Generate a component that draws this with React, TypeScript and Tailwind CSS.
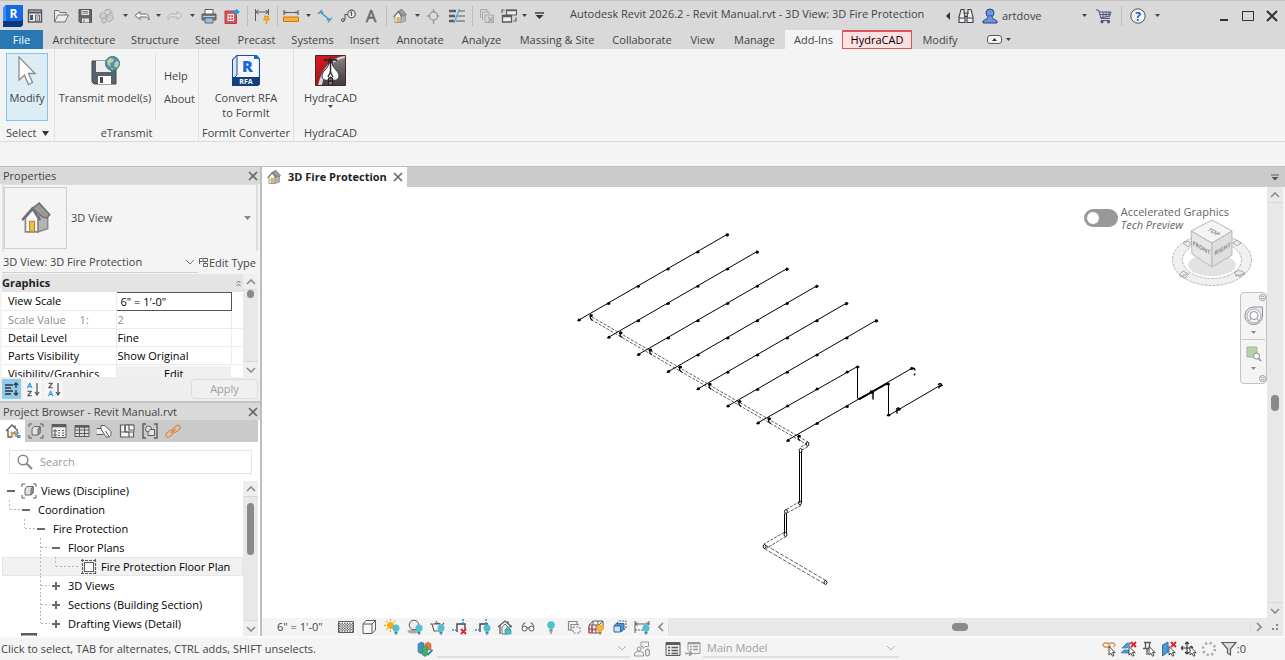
import { ReactNode, useState } from 'react'

type IconProps = { children: ReactNode; w?: number; h?: number; box?: string }

function Svg({ children, w = 16, h = 16, box = '0 0 16 16' }: IconProps) {
  return (
    <svg width={w} height={h} viewBox={box} fill="none" stroke="#5c5c5c" className="shrink-0" aria-hidden="true">
      {children}
    </svg>
  )
}

const Caret = ({ color = '#444' }: { color?: string }) => (
  <Svg w={5} h={3} box="0 0 5 3">
    <path d="M0 0h5L2.500 3z" fill={color} stroke="none" />
  </Svg>
)

const Chevron = ({ d = 'M1 1l4 4 4-4', color = '#8a8a8a' }: { d?: string; color?: string }) => (
  <Svg w={10} h={6} box="0 0 10 6">
    <path d={d} stroke={color} strokeWidth="1.600" />
  </Svg>
)
const up = 'M1 5l4-4 4 4'

const Cross = () => (
  <Svg w={10} h={10} box="0 0 10 10">
    <path d="M1 1l8 8M9 1l-8 8" stroke="#666" strokeWidth="1.600" />
  </Svg>
)

const House = ({ size = 16 }: { size?: number }) => (
  <Svg w={size} h={size}>
    <path d="M3 8v6.500h6V8L6.500 4z" fill="#f7f7f7" stroke="#888" strokeWidth=".8" />
    <path d="M9 14.500l4.500-1.500V6.500L10 6 9 8z" fill="#b4b4b4" stroke="#888" strokeWidth=".7" />
    <path d="M6.300 3.500L9.500 1 14.500 6.500 13 8 11 7.500z" fill="#9b9b9b" stroke="#707070" strokeWidth=".7" />
    <path d="M1.500 9L6.300 3.500 10 9" stroke="#707070" strokeWidth="1.100" />
    <path d="M5 9.500h2.300v5H5z" fill="#f2bd42" stroke="#a88634" strokeWidth=".5" />
  </Svg>
)

const CursorArrow = ({ x = 7, y = 6 }: { x?: number; y?: number }) => (
  <path transform={`translate(${x} ${y})`} d="M0 0v8.500l2-1.800 1.500 3 1.400-.7-1.400-2.900h2.700z" fill="#fff" stroke="#333" strokeWidth=".9" />
)

const RedX = ({ x = 9, y = 0 }: { x?: number; y?: number }) => (
  <path transform={`translate(${x} ${y})`} d="M1 1l5 5M6 1L1 6" stroke="#e0222b" strokeWidth="1.900" />
)

const Bulb = ({ color = '#4fc0cf' }: { color?: string }) => (
  <>
    <circle cx="12" cy="9" r="3.500" fill={color} stroke="none" />
    <path d="M10.500 12h3v3h-3z" fill={color} stroke="none" />
    <path d="M10.800 13.500h2.400M11 15h2" stroke="#666" strokeWidth=".8" />
  </>
)

const RevitLogo = () => (
  <Svg w={20} h={22} box="0 0 20 22">
    <path d="M3 0h17v18l-2 3H0V3z" fill="#1467e6" stroke="none" />
    <path d="M0 3L3 0v16L0 20z" fill="#3c8dfa" stroke="none" />
    <path d="M0 16h18l2-2v6l-2 2H0z" fill="#07397f" stroke="none" />
    <text x="10.500" y="13" textAnchor="middle" fontSize="12" fontWeight="700" fill="#fff" stroke="none">R</text>
  </Svg>
)

const qat: { name: string; w: string; icon?: ReactNode }[] = [
  { name: 'Revit', w: 'w-[26px]', icon: <RevitLogo /> },
  { name: 'Home', w: 'w-[18px]', icon: <Svg><rect x="1.500" y="2" width="13" height="12" fill="#eee" stroke="#4c5560" strokeWidth="1.400" /><path d="M1 4.500h14" stroke="#4c5560" strokeWidth="2" /><rect x="3" y="7" width="3" height="5" fill="#4c5560" stroke="none" /><path d="M8.500 7h4v6h-4zM9.500 9h2M9.500 11h2" strokeWidth=".9" /></Svg> },
  { name: 'gap', w: 'w-[6px]' },
  { name: 'Open', w: 'w-[22px]', icon: <Svg><path d="M1.500 14V2.500h4l1.500 2h6V7M1.500 14L5 7h10.500l-3.500 7z" fill="#ececec" stroke="#707070" /></Svg> },
  { name: 'gap', w: 'w-[2px]' },
  { name: 'Save', w: 'w-[22px]', icon: <Svg><path d="M2 1.500h12.500v13H3l-1-1z" fill="#666" stroke="#555" /><path d="M4.500 2h7.500v5H4.500zM5 10.500h7v4H5z" fill="#e4e4e4" stroke="none" /><path d="M5.500 3.500h5.500M5.500 5.200h5.500M7 11.500v3" strokeWidth=".8" /></Svg> },
  { name: 'Synchronize', w: 'w-[22px]', icon: <Svg><g stroke="#aaa" fill="#cfcfcf"><path d="M1 6l3-1.500L7 6v3.500L4 11 1 9.500zM6 4V2.500L9 1l3 1.500V5M7 8l3-2 4 2v3l-4 3-3-3z" /><circle cx="5" cy="12.500" r="2.500" /><path d="M9 10a4 4 0 0 1 5-5" /></g></Svg> },
  { name: 'caret', w: 'w-[14px]' },
  { name: 'Undo', w: 'w-[20px]', icon: <Svg><path d="M1 7.500l5-4v2.500h5.500c3 0 3.500 2.500 3.500 6C14 9.500 13 9 11 9H6v2.500z" fill="#f2f2f2" stroke="#707070" /></Svg> },
  { name: 'caret', w: 'w-[12px]' },
  { name: 'Redo', w: 'w-[22px]', icon: <Svg><path d="M15 7.500l-5-4v2.500H4.500C1.500 6 1 8.500 1 12c1-2.500 2-3 4-3h5v2.500z" fill="#dedede" stroke="#b4b4b4" /></Svg> },
  { name: 'caret', w: 'w-[12px]' },
  { name: 'Print', w: 'w-[22px]', icon: <Svg><path d="M4 6V1.500h8V6" fill="#fff" /><path d="M1 6h14v6H1z" fill="#777" /><path d="M2 8.500h12" stroke="#ccc" /><path d="M4 10h8v5H4z" fill="#8cc5ef" stroke="#666" /></Svg> },
  { name: 'Export PDF', w: 'w-[24px]', icon: <Svg><path d="M1 3h11.500v12.500H1z" fill="#d5535b" stroke="#b93a42" /><path d="M4 6.500h5.500v6H4z" fill="#d5535b" stroke="#fff" /><path d="M4 9.500h5.500M6.800 6.500v6" stroke="#fff" strokeWidth=".7" /><path d="M8.500 5V2.500H12V.5l4 3.500-4 3V5z" fill="#1b9be4" stroke="none" /></Svg> },
  { name: 'sep', w: 'w-[6px]' },
  { name: 'Measure', w: 'w-[24px]', icon: <Svg><path d="M1.500 1v12M14.500 1v6M1.500 4h13M1.500 4l3-2M1.500 4l3 2M14.500 4l-3-2M14.500 4l-3 2" /><path d="M10 8.500h5M11 8v3M14 8v3M9 11.500h7M12.500 12v4" stroke="#f19c13" strokeWidth="1.500" /></Svg> },
  { name: 'sep', w: 'w-[6px]' },
  { name: 'Ruler', w: 'w-[22px]', icon: <Svg><path d="M1 2v5M15 2v5M1 4.500h14M3 3.500v2M13 3.500v2" strokeWidth="1.200" /><path d="M.5 9h15v4.500H.5z" fill="#f8b23b" stroke="#c27a10" /></Svg> },
  { name: 'caret', w: 'w-[12px]' },
  { name: 'Aligned Dimension', w: 'w-[22px]', icon: <Svg><path d="M3 4l10 8" stroke="#2d96dc" strokeWidth="1.500" /><path d="M1 6l4-4M11 14.500l4-5M3 4l3.500.4M13 12l-3.500-.4" stroke="#4c8cba" strokeWidth="1.200" /></Svg> },
  { name: 'Tag', w: 'w-[24px]', icon: <Svg><circle cx="11.500" cy="6" r="3.800" fill="#e7e7e7" strokeWidth="1.200" /><path d="M10.500 5l1-1v4M7.500 6.500H5V12" strokeWidth="1.100" /><path d="M5 11.500L2 14" /><circle cx="3" cy="12" r="1.500" /></Svg> },
  { name: 'Text', w: 'w-[22px]', icon: <Svg w={16} h={20} box="0 0 16 20"><text x="8" y="16" textAnchor="middle" fontSize="16" fill="#666" stroke="#666" strokeWidth=".6">A</text></Svg> },
  { name: 'sep', w: 'w-[8px]' },
  { name: 'Default 3D View', w: 'w-[20px]', icon: <House /> },
  { name: 'caret', w: 'w-[14px]' },
  { name: 'Section', w: 'w-[20px]', icon: <Svg><path d="M8 3l6 5-6 5z" fill="#b5b5b5" stroke="none" /><circle cx="7.500" cy="8" r="4" fill="#dcdcdc" stroke="#999" strokeWidth="1.300" /><path d="M7.500 1v3M7.500 12v4M1 8h2.500" stroke="#999" strokeWidth="1.300" /></Svg> },
  { name: 'Thin Lines', w: 'w-[26px]', icon: <Svg><path d="M0 3h7M0 8h6M0 13h5" strokeWidth="2.600" /><path d="M9 3h7M8 8h8M7 13h9" strokeWidth="1.200" /><path d="M10.500 1L5 15" stroke="#58a9e0" strokeWidth="1.400" /></Svg> },
  { name: 'sep', w: 'w-[4px]' },
  { name: 'Close Inactive Views', w: 'w-[26px]', icon: <Svg><g stroke="#a8a8a8"><path d="M1.500 10V1.500H8V4M3.500 12V4H10v2M6 7h8.500v7.500H6z" /><path d="M9 9l5 5M14 9l-5 5" strokeWidth="1.600" /></g></Svg> },
  { name: 'Switch Windows', w: 'w-[18px]', icon: <Svg><path d="M5.500 2h10v5h-10z" fill="#eee" strokeWidth="1.200" /><path d="M1.500 7.500h9v6.500h-9z" fill="#eee" strokeWidth="1.300" /><path d="M5 2.500h11M1 8.500h10" strokeWidth="1.600" /><path d="M1 2h2.500M1 1.500V5M15 9.500V13h-2.500" strokeWidth="1.200" /></Svg> },
  { name: 'caret', w: 'w-[12px]' },
  { name: 'Customize', w: 'w-[18px]', icon: <Svg w={9} h={7} box="0 0 9 7"><path d="M0 1h9" stroke="#333" strokeWidth="1.400" /><path d="M.5 3h8l-4 4z" fill="#333" stroke="none" /></Svg> },
]

function TitleBar() {
  return (
    <header className="flex h-[30px] shrink-0 items-center border-t border-[#c4c4c4] bg-[#d9d9d9]">
      {qat.map((item, i) => {
        if (item.name === 'gap') return <span key={i} className={item.w} />
        if (item.name === 'sep')
          return (
            <span key={i} className={`${item.w} flex justify-center`}>
              <span className="h-5 w-px bg-[#bcbcbc]" />
            </span>
          )
        return (
          <button
            key={i}
            aria-label={item.name === 'caret' ? 'More options' : item.name}
            className={`${item.w} flex h-6 shrink-0 items-center justify-center`}
          >
            {item.icon ?? <Caret />}
          </button>
        )
      })}
      <h1 className="-mt-1 ml-[22px] whitespace-nowrap">Autodesk Revit 2026.2 - Revit Manual.rvt - 3D View: 3D Fire Protection</h1>

      <div className="ml-auto flex items-center">
        <button aria-label="Collapse search" className="flex w-3 justify-center">
          <Svg w={4} h={8} box="0 0 4 8"><path d="M4 0v8L0 4z" fill="#333" stroke="none" /></Svg>
        </button>
        <button aria-label="Search" className="flex w-6 justify-center">
          <Svg><path d="M3 1.500h3v4l1 2.500v6.500H1V9zM10 1.500h3L15 9v5.500H9V8l1-2.500zM6 5h4M6 8.500h4M1 10h6M9 10h6" fill="#eee" stroke="#39424c" strokeWidth="1.100" /></Svg>
        </button>
        <button className="flex items-center">
          <span className="flex w-6 justify-center">
            <Svg><circle cx="8" cy="5" r="4" fill="#6b94e8" stroke="#2c4374" /><path d="M1 15v-2l5-3V8h4v2l5 3v2z" fill="#6b94e8" stroke="#2c4374" /><path d="M6 8.500h4v2H6z" fill="#6b94e8" stroke="none" /></Svg>
          </span>
          <span className="w-[75px] text-left">artdove</span>
          <span className="flex w-[14px] justify-center"><Caret /></span>
        </button>
        <button aria-label="App Store" className="flex w-[26px] justify-center">
          <Svg><path d="M0 2h2.500L5 10.500h9M3 4h12l-1.500 4.500L5 9.500M5 12.500h8.500M7 4v5M10 4v5M13 4v4M4 6.500h10" stroke="#47557f" /><circle cx="6" cy="13.800" r="1.200" fill="#47557f" /><circle cx="12.500" cy="13.800" r="1.200" fill="#47557f" /></Svg>
        </button>
        <span className="mx-1 h-5 w-px bg-[#bcbcbc]" />
        <button aria-label="Help" className="flex w-6 justify-center">
          <Svg><circle cx="8" cy="8" r="7.200" fill="#f5f5f5" stroke="#47505c" /><text x="8" y="12.500" textAnchor="middle" fontSize="12" fontWeight="700" fill="#1c5fc4" stroke="none">?</text></Svg>
        </button>
        <button aria-label="Help options" className="flex w-[14px] justify-center"><Caret /></button>
        <div className="ml-12 flex pr-px">
          <button aria-label="Minimize" className="flex w-6 justify-center">
            <Svg w={12} h={12} box="0 0 12 12"><path d="M2 10h8" stroke="#333" strokeWidth="2" /></Svg>
          </button>
          <button aria-label="Maximize" className="flex w-6 justify-center">
            <Svg w={12} h={12} box="0 0 12 12"><path d="M.5 1.500h11v9H.5z" stroke="#333" /><path d="M0 1.500h12" stroke="#333" /></Svg>
          </button>
          <button aria-label="Close" className="flex w-6 justify-center">
            <Svg w={12} h={12} box="0 0 12 12"><path d="M1 1l10 10M11 1L1 11" stroke="#333" strokeWidth="2" /></Svg>
          </button>
        </div>
      </div>
    </header>
  )
}

const tabs = [
  ['File', 'w-[43px] bg-[#2878b4] text-white mr-px'],
  ['Architecture', 'w-20'],
  ['Structure', 'w-[62px]'],
  ['Steel', 'w-[43px]'],
  ['Precast', 'w-[55px]'],
  ['Systems', 'w-[57px]'],
  ['Insert', 'w-[47px]'],
  ['Annotate', 'w-16'],
  ['Analyze', 'w-[59px]'],
  ['Massing & Site', 'w-[92px]'],
  ['Collaborate', 'w-[78px]'],
  ['View', 'w-[43px]'],
  ['Manage', 'w-[61px]'],
  ['Add-Ins', 'w-[57px] bg-[#f4f4f4]'],
  ['HydraCAD', 'w-[70px] border border-t-2 border-[#d8575c] bg-[#fde1e1] text-black'],
  ['Modify', 'w-14'],
]

function RibbonTabs() {
  return (
    <nav className="flex h-[19px] shrink-0 bg-[#d9d9d9]">
      {tabs.map(([name, style]) => (
        <button key={name} className={`${style} flex shrink-0 items-center justify-center whitespace-nowrap`}>
          {name}
        </button>
      ))}
      <button aria-label="Ribbon display" className="ml-[19px] flex items-center gap-1">
        <Svg w={15} h={9} box="0 0 15 9"><rect x=".5" y=".5" width="14" height="8" rx="2.500" fill="#f4f4f4" /><path d="M5 6h5L7.500 3z" fill="#333" stroke="none" /></Svg>
        <Caret />
      </button>
    </nav>
  )
}

function Ribbon() {
  return (
    <section className="flex h-[93px] shrink-0 border-b border-[#dadada] bg-[#f4f4f4]">
      <div className="flex w-[55px] flex-col border-r border-[#e0e0e0] pl-[6px] pt-1">
        <button className="flex h-[68px] w-[42px] flex-col items-center border border-[#83c5e4] bg-[#dcedf6] pt-[2px]">
          <Svg w={20} h={30} box="0 0 20 30"><path d="M2 1v23l5.500-5 4 9.500 4-2-4-9H18z" fill="#fff" stroke="#8a8a8a" strokeWidth="1.300" /></Svg>
          <span className="mt-1">Modify</span>
        </button>
        <button className="mt-1 flex items-center gap-[6px] whitespace-nowrap">
          Select
          <Svg w={7} h={5} box="0 0 7 5"><path d="M0 0h7L3.500 5z" fill="#333" stroke="none" /></Svg>
        </button>
      </div>

      <div className="flex w-[144px] flex-col border-r border-[#e0e0e0] pt-1">
        <div className="flex h-[68px]">
          <button className="flex w-[101px] flex-col items-center whitespace-nowrap border-r border-[#e0e0e0] pt-[3px]">
            <Svg w={32} h={30} box="0 0 32 30">
              <path d="M3 5h22l2 2v21H5l-2-2z" fill="#59636e" stroke="#414a54" />
              <path d="M7 5h15v11H7z" fill="#eee" stroke="none" />
              <path d="M9 20h13v8H9z" fill="#fff" stroke="none" />
              <path d="M11 21h3v6h-3z" fill="#414a54" stroke="none" />
              <circle cx="23.500" cy="7.500" r="7" fill="#568fad" stroke="#477486" />
              <path d="M18 5l3-3 4 1-1 3-3 1 1 4-3-2zM26 6l3-1 1 3-2 4-3-2zM22 12l3 1-2 1z" fill="#b5d49a" stroke="none" />
            </Svg>
            <span className="mt-1">Transmit model(s)</span>
          </button>
          <div className="flex flex-col items-start pl-2 pt-[11px]">
            <button className="h-[23px]">Help</button>
            <button className="h-[23px]">About</button>
          </div>
        </div>
        <p className="mt-1 text-center">eTransmit</p>
      </div>

      <div className="flex w-[95px] flex-col items-center whitespace-nowrap border-r border-[#e0e0e0] pt-1">
        <button className="flex h-[68px] flex-col items-center pt-[2px]">
          <Svg w={28} h={31} box="0 0 28 31">
            <path d="M5 .5h19l3.500 4V29l-3 1.500H.5V5z" fill="#f4f7fc" stroke="#1c4f9b" strokeWidth="1.200" />
            <path d="M.5 5L5 .5V20L.5 24z" fill="#dbe5f4" stroke="#1c4f9b" />
            <path d="M22 0h3l3 4h-6z" fill="#1767dc" stroke="none" />
            <path d="M0 22h28v7l-2 2H0z" fill="#133f82" stroke="none" />
            <text x="15.500" y="17" textAnchor="middle" fontSize="16" fontWeight="800" fill="#1767dc" stroke="none">R</text>
            <text x="14" y="29" textAnchor="middle" fontSize="7" fontWeight="700" fill="#fff" stroke="none">RFA</text>
          </Svg>
          <span className="mt-1 leading-[15px]">Convert RFA<br />to FormIt</span>
        </button>
        <p className="mt-1">FormIt Converter</p>
      </div>

      <div className="flex w-[73px] flex-col items-center pt-1">
        <button className="flex h-[68px] flex-col items-center pt-[2px]">
          <Svg w={31} h={31} box="0 0 31 31">
            <defs>
              <linearGradient id="red" x1="0" y1="0" x2="1" y2="1"><stop stopColor="#d91d23" /><stop offset="1" stopColor="#7a1216" /></linearGradient>
              <linearGradient id="steel" x1="0" y1="0" x2="0" y2="1"><stop stopColor="#8b8486" /><stop offset="1" stopColor="#423b3c" /></linearGradient>
            </defs>
            <path d="M.5.500h30v30H.5z" fill="url(#steel)" stroke="#4a2528" />
            <path d="M1 1h27C15 3 6 13 3 30H1z" fill="url(#red)" stroke="none" />
            <path d="M30 1C16 3 7 13 3 30h4C10 14 18 5 30 3z" fill="#d9d4d4" stroke="none" />
            <path d="M14 8C13 14 7 16 7 21c0 3 3 5 6 4l2-3h1l2 3c3 1 6-1 6-4 0-5-6-7-7-13z" fill="#fff" stroke="#333" />
            <path d="M9 6q1-2 3-1h7q2-1 3 1M15.500 3v14M13 8l2.500-3L18 8" stroke="#222" strokeWidth="1.400" />
            <path d="M13.500 23h4v7h-4z" fill="#777" stroke="#222" />
            <path d="M13 26h5M15.500 17l-2.500 5M15.500 17l2.500 5" stroke="#222" strokeWidth="1.300" />
          </Svg>
          <span className="mt-1 leading-[15px]">HydraCAD</span>
          <span className="leading-[5px]"><Caret /></span>
        </button>
        <p className="mt-1">HydraCAD</p>
      </div>
    </section>
  )
}

function Scrollbar({ thumb }: { thumb: string }) {
  return (
    <div className="flex w-[15px] shrink-0 flex-col items-center bg-[#e8e8e8]">
      <button aria-label="Scroll up" className="flex h-4 w-full shrink-0 items-center justify-center border-b border-[#d8d8d8] bg-[#eee]"><Chevron d={up} /></button>
      <span className={`${thumb} w-[7px] rounded-full bg-[#8a8a8a]`} />
      <button aria-label="Scroll down" className="mt-auto flex h-4 w-full shrink-0 items-center justify-center border-t border-[#d8d8d8] bg-[#eee]"><Chevron /></button>
    </div>
  )
}

function PanelTitle({ children }: { children: ReactNode }) {
  return (
    <div className="flex h-[17px] shrink-0 items-center justify-between bg-[#d9d9d9] pl-[3px] pr-[2px]">
      <h2>{children}</h2>
      <button aria-label="Close panel"><Cross /></button>
    </div>
  )
}

const sortIcon = (top: string, bottom: string, topColor: string, bottomColor: string) => (
  <Svg>
    <text x="4.500" y="7" textAnchor="middle" fontSize="8" fill={topColor} stroke={topColor} strokeWidth=".3">{top}</text>
    <text x="4.500" y="15" textAnchor="middle" fontSize="8" fill={bottomColor} stroke={bottomColor} strokeWidth=".3">{bottom}</text>
    <path d="M12 2v12M10 11l2 3 2-3" strokeWidth="1.300" />
  </Svg>
)

function Properties() {
  const cell = 'h-[18px] border-b border-r border-[#ececec] p-0 pl-[6px] whitespace-nowrap'
  const value = 'h-[18px] border-b border-r border-[#ececec] p-0 pl-px whitespace-nowrap'
  return (
    <section className="flex h-[236px] shrink-0 flex-col border-b-2 border-[#c4c4c4] bg-[#f4f4f4]">
      <PanelTitle>Properties</PanelTitle>
      <div className="mx-[2px] flex h-[67px] shrink-0 items-center border-x-2 border-t border-[#dedede]">
        <div className="flex h-[62px] w-[63px] items-center justify-center border border-[#cfcfcf]"><House size={34} /></div>
        <button className="flex flex-1 items-center justify-between pl-1 pr-[5px]">
          3D View
          <Svg w={7} h={4} box="0 0 7 4"><path d="M0 0h7L3.500 4z" fill="#888" stroke="none" /></Svg>
        </button>
      </div>
      <div className="flex h-[23px] shrink-0 items-center pl-[2px]">
        <label className="relative flex h-[21px] w-[196px] shrink-0 items-center border-b border-[#d0d0d0]">
          <select aria-label="View" className="w-full appearance-none pl-px">
            <option>3D View: 3D Fire Protection</option>
          </select>
          <span className="pointer-events-none absolute right-1"><Svg w={8} h={5} box="0 0 8 5"><path d="M0 0l4 4 4-4" stroke="#777" /></Svg></span>
        </label>
        <button className="flex items-center gap-px whitespace-nowrap pl-px">
          <Svg w={9} h={9} box="0 0 9 9"><path d="M.5 6V.5h3M.5 3.500h3M4 .5h4.500v3H4zM4.500 5.500h4V8.500h-4zM6 3.500v2" stroke="#555" strokeWidth=".9" /></Svg>
          Edit Type
        </button>
      </div>
      <div className="mx-[2px] flex min-h-0 flex-1 text-black">
        <div className="min-w-0 flex-1 overflow-hidden bg-white">
          <div className="flex h-[18px] items-center justify-between bg-[#e4e4e4] pr-[2px] font-bold text-[#222]">
            Graphics
            <Svg w={5} h={7} box="0 0 5 7"><path d="M.5 3l2-2 2 2M.5 6l2-2 2 2" strokeWidth=".8" /></Svg>
          </div>
          <table className="w-full table-fixed border-collapse">
            <colgroup><col className="w-[114px]" /><col className="w-[115px]" /><col /></colgroup>
            <tbody>
              <tr>
                <td className={cell}>View Scale</td>
                <td className="h-[18px] border border-[#555] p-0"><input aria-label="View Scale" defaultValue={'6" = 1\'-0"'} className="block w-full pl-1 outline-none" /></td>
                <td />
              </tr>
              <tr className="text-[#8c8c8c]">
                <td className={cell}>Scale Value<span className="pl-[14px]">1:</span></td>
                <td className={value}>2</td>
                <td className="border-b border-[#ececec]" />
              </tr>
              <tr>
                <td className={cell}>Detail Level</td>
                <td className={value}>Fine</td>
                <td className="border-b border-[#ececec]" />
              </tr>
              <tr>
                <td className={cell}>Parts Visibility</td>
                <td className={value}>Show Original</td>
                <td className="border-b border-[#ececec]" />
              </tr>
              <tr>
                <td className={cell}>Visibility/Graphics</td>
                <td className="p-0"><button className="block w-full bg-[#f0f0f0] text-center">Edit</button></td>
                <td />
              </tr>
            </tbody>
          </table>
        </div>
        <Scrollbar thumb="h-2" />
      </div>
      <div className="flex h-6 shrink-0 items-center gap-[2px] bg-[#eee] pl-[2px] pr-[2px]">
        <button aria-label="Group by category" className="flex h-5 w-[19px] items-center justify-center bg-[#8ecbec]">
          <Svg><path d="M1 4h8M1 7h6M1 10h8M1 13h6M12 2v5M12 9v5M10 4l2-2 2 2M10 12l2 2 2-2" stroke="#333" strokeWidth="1.300" /></Svg>
        </button>
        <button aria-label="Sort ascending" className="flex h-5 w-[19px] items-center justify-center bg-[#f6f6f6]">{sortIcon('A', 'Z', '#1b8fd8', '#444')}</button>
        <button aria-label="Sort descending" className="flex h-5 w-[19px] items-center justify-center bg-[#f6f6f6]">{sortIcon('Z', 'A', '#444', '#1b8fd8')}</button>
        <button disabled className="ml-auto h-5 w-[67px] rounded-sm border border-[#dcdcdc] bg-[#f0f0f0] text-[#a0a0a0]">Apply</button>
      </div>
    </section>
  )
}

const ViewsIcon = () => (
  <Svg><path d="M1 4V1h3M12 1h3v3M15 12v3h-3M4 15H1v-3" /><path d="M4 6l2-2.500h6V10l-2 2H4z" fill="#e2e2e2" strokeWidth=".9" /><path d="M10 6l2-2.500V10l-2 2z" fill="#aaa" strokeWidth=".9" /></Svg>
)

const browserIcons: [string, ReactNode][] = [
  ['Home', <Svg><path d="M1 8l6-6 6 6M3 7v7h4M10 2.500V5" strokeWidth="1.300" /><path d="M6 9h2v5H6z" fill="#f2bd42" stroke="#a88634" strokeWidth=".6" /><path d="M9 9h4v2H9zM11 11v3" /><path d="M12 12h3.500v3H12z" fill="#4a90d2" stroke="none" /></Svg>],
  ['Views', <ViewsIcon />],
  ['Legends', <Svg><path d="M1 1.500h14v13H1z" fill="#eee" /><path d="M1 3h14" strokeWidth="2.500" /><path d="M3 7h2v2H3zM3 11h2v2H3zM7 7.500h2M11 7.500h2M7 10h2M11 10h2M7 12.500h2M11 12.500h2" /></Svg>],
  ['Schedules', <Svg><path d="M1 2.500h14v11H1z" fill="#ddd" /><path d="M1 3.500h14" strokeWidth="2.500" /><path d="M1 7h14M1 10.500h14M5.500 4v10M10.500 4v10" /></Svg>],
  ['Sheets', <Svg><path d="M1 6h9l4 8H9L7 11H1z" fill="#eee" stroke="none" /><path d="M.5 5.500h5M.5 11.500h7" /><path d="M5 2.500h4l6 6v3q-1 3-3 2.500h-2L5 6z" fill="#f6f6f6" /><path d="M9.500 8l3.500 5.500" /></Svg>],
  ['Families', <Svg><path d="M1.500 2h13v12h-13z" fill="#f4f4f4" strokeWidth="1.200" /><path d="M6 2v7h9V2z" fill="#f4f4f4" /><path d="M6 2v7H1.500M6 9h4v5M10 2v5h4.500" strokeWidth="1.200" /></Svg>],
  ['Groups', <Svg><path d="M4 1H1v14h3M12 1h3v14h-3" strokeWidth="1.400" /><circle cx="6.500" cy="6" r="3" fill="#e4e4e4" /><path d="M8 6.500h4.500v6H6V9.500z" fill="#e4e4e4" /></Svg>],
  ['Links', <Svg><g stroke="#e08a45" strokeWidth="1.300"><rect x="7.500" y="3.500" width="8" height="4.500" rx="2.200" transform="rotate(-42 11.500 5.700)" /><rect x=".5" y="8.500" width="8" height="4.500" rx="2.200" transform="rotate(-42 4.500 10.700)" /><path d="M5.500 10L10.500 6" /></g></Svg>],
]

type Node = { label: string; open?: boolean; pad: string; icon?: ReactNode; line?: string }
const tree: Node[] = [
  { label: 'Views (Discipline)', open: true, pad: 'pl-1', icon: <ViewsIcon /> },
  { label: 'Coordination', open: true, pad: 'pl-[19px]', line: 'M7.500 0V9M8 9.500H18' },
  { label: 'Fire Protection', open: true, pad: 'pl-[34px]', line: 'M22.500 0V9M23 9.500H33' },
  { label: 'Floor Plans', open: true, pad: 'pl-[49px]', line: 'M38.500 0V19M39 9.500H48' },
  { label: 'Fire Protection Floor Plan', pad: 'pl-[79px]', line: 'M38.500 0V19M53.500 0V9M54 9.500H78' },
  { label: '3D Views', open: false, pad: 'pl-[49px]', line: 'M38.500 0V19M39 9.500H48' },
  { label: 'Sections (Building Section)', open: false, pad: 'pl-[49px]', line: 'M38.500 0V19M39 9.500H48' },
  { label: 'Drafting Views (Detail)', open: false, pad: 'pl-[49px]', line: 'M38.500 0V9M39 9.500H48' },
]

function ProjectBrowser() {
  return (
    <section className="flex min-h-0 flex-1 flex-col bg-white">
      <PanelTitle>Project Browser - Revit Manual.rvt</PanelTitle>
      <div className="mx-[2px] flex h-[22px] shrink-0 bg-[#cacaca]">
        <div className="flex w-[182px]">
          {browserIcons.map(([name, icon], i) => (
            <button key={name} aria-label={name} className={`flex flex-1 items-center justify-center ${i === 0 ? 'bg-white' : ''}`}>
              {icon}
            </button>
          ))}
        </div>
      </div>
      <label className="ml-[9px] mr-2 mt-2 flex h-6 shrink-0 items-center gap-[7px] border border-[#e4e4e4] pl-[7px]">
        <Svg><circle cx="6" cy="6" r="4.800" stroke="#888" strokeWidth="1.500" /><path d="M9.500 9.500L15 15" stroke="#888" strokeWidth="2" /></Svg>
        <input placeholder="Search" className="min-w-0 flex-1 outline-none placeholder:text-[#999]" />
      </label>
      <div className="mx-[2px] mt-[7px] flex min-h-0 flex-1">
        <ul className="min-w-0 flex-1 overflow-hidden text-black">
          {tree.map((node) => (
            <li key={node.label} className={`relative h-[19px] ${node.open === undefined ? 'bg-[#f1f1f1] outline -outline-offset-1 outline-[#e6e6e6]' : ''}`}>
              {node.line && (
                <svg className="pointer-events-none absolute left-0 top-0" width="80" height="19" fill="none" aria-hidden="true">
                  <path d={node.line} stroke="#b8b8b8" strokeDasharray="2 2" />
                </svg>
              )}
              <button className={`${node.pad} flex h-full items-center whitespace-nowrap`}>
                {node.open !== undefined && (
                  <Svg w={9} h={8} box="0 0 9 8"><path d={node.open ? 'M1 4h8' : 'M1 4h8M5 0v8'} stroke="#6a6a6a" strokeWidth="2" /></Svg>
                )}
                {node.open === undefined && (
                  <Svg><rect x="3.500" y="3.500" width="9" height="9" fill="#fff" /><path d="M1.500 0v16M14.500 0v16M0 1.500h16M0 14.500h16" strokeDasharray="3 1" strokeWidth="1.200" /></Svg>
                )}
                {node.icon && <span className="ml-[6px]">{node.icon}</span>}
                <span className={node.icon || node.open === undefined ? 'ml-1' : 'ml-2'}>{node.label}</span>
              </button>
            </li>
          ))}
          <li className="h-[19px] pl-[19px]">
            <button aria-label="Legends" className="block">
              <Svg><path d="M.5.500h15v14H.5z" /><path d="M0 1h16" strokeWidth="3" /></Svg>
            </button>
          </li>
        </ul>
        <Scrollbar thumb="mt-[6px] h-[52px]" />
      </div>
    </section>
  )
}

const branches = [0, 1, 2, 3, 4, 5]
const heads = [0, 1, 2, 3, 4]

function Fitting({ x, y }: { x: number; y: number }) {
  return <path d={`M${x - 2} ${y + 1}l1.500-2.500 2 .5.500 1.500-1.500 1z`} fill="#000" stroke="none" />
}

function PipeModel() {
  return (
    <svg className="h-full w-full" viewBox="262 187 1005 430" fill="none" stroke="#000" role="img" aria-label="Sprinkler piping">
      {branches.map((b) => {
        const x = b * 29.8
        const y = b * 17.2
        return (
          <g key={b}>
            <path d={`M${578 + x} ${320 + y}L${727 + x} ${234 + y}`} />
            <Fitting x={579 + x} y={319.5 + y} />
            {heads.map((h) => <Fitting key={h} x={608.5 + x + h * 29.7} y={303 + y - h * 17.2} />)}
            <path d={`M${727 + x} ${233 + y}v3`} strokeWidth="1.200" />
          </g>
        )
      })}
      <path d="M757.500 422.500L857.500 366V398M858 398.500L888.500 382.500V415L940 385M787 440L911.500 368" />
      <path d="M859 399L887 383" strokeWidth="1.600" />
      {[[758, 422.5], [787.5, 405.5], [817, 388.5], [847, 371.5], [857.5, 366.5], [788, 440], [817, 423], [847, 406], [888, 383.5], [888.5, 414.5], [872, 392], [911.5, 368]].map(([x, y]) => (
        <Fitting key={`${x}-${y}`} x={x} y={y} />
      ))}
      <path d="M870 391q4-2 3 3v5M911 368q4-1 4 2M914.500 373v2M896 409q3-3 4 0l-3 1v3M938 384q3-2 4 1l-3 1v2" strokeWidth="1.400" />

      {/* cross main with a tee at each branch line */}
      <g strokeWidth=".8" stroke="#333">
        <path d="M591 319L806 443.500M592 316.500L808 441.500" strokeDasharray="3 1.500" />
        <path d="M799.500 451V502M801.500 451V502M784.500 513V533M786.500 513V533" strokeWidth="1" stroke="#000" />
        <path d="M808 446L801 450M807 443L800 447M800 501L786 509M801 505L788 512M784 532L764 543.500M786 536L766 548" strokeDasharray="3 1.200" />
        <path d="M764 548L824 583M766 545L826 580" strokeDasharray="4 1.500" />
      </g>
      {[0, 1, 2, 3, 4, 5, 6, 7].map((t) => (
        <g key={t}>
          <Fitting x={591 + t * 29.7} y={315 + t * 17.2} />
          <path d={`M${590.5 + t * 29.7} ${314 + t * 17.2}v4l2 2`} strokeWidth="1.200" />
        </g>
      ))}
      {[[807.5, 443.5], [800.5, 450], [800, 502.5], [786, 511], [785.5, 534], [764.5, 546], [825.5, 582]].map(([x, y]) => (
        <ellipse key={`${x}-${y}`} cx={x} cy={y} rx="1.400" ry="2" strokeWidth=".9" />
      ))}
    </svg>
  )
}

function ViewCube() {
  return (
    <Svg w={82} h={68} box="0 0 82 68">
      <g stroke="#b8b8b8">
        <ellipse cx="41" cy="41" rx="39.500" ry="25.500" fill="#f0f0f0" strokeDasharray="3 1" />
        <ellipse cx="41" cy="41" rx="29.500" ry="18.500" fill="#fff" strokeDasharray="3 1" />
        <ellipse cx="41" cy="46" rx="24" ry="11" fill="#e2e2e2" stroke="none" />
        <path d="M8 56l4-4 6 3-4 4zM9 58l7-3M63 54l5-3 6 3-5 4zM64 57l9-2M12 24l4-2 5 2-4 4zM62 24l4-3 4 3-4 3z" fill="#e8e8e8" stroke="#999" strokeWidth=".8" />
        <path d="M20 12L41 1l20 11-20 12z" fill="#f4f4f4" />
        <path d="M20 12l21 12v24L21 35z" fill="#e6e6e6" />
        <path d="M61 12L41 24v24l20-12z" fill="#dedede" />
      </g>
      <g fill="#8b8b8b" stroke="none" fontSize="6" fontWeight="700" textAnchor="middle">
        <text transform="matrix(.87 .5 -.87 .5 41 14)">TOP</text>
        <text transform="matrix(.87 .5 0 1 30.500 31)">FRONT</text>
        <text transform="matrix(.87 -.5 0 1 51.500 32)">RIGHT</text>
      </g>
    </Svg>
  )
}

const SmallDot = () => (
  <button aria-label="Navigation bar options" className="self-end">
    <Svg w={7} h={7} box="0 0 7 7"><circle cx="3.500" cy="3.500" r="3" stroke="#999" /><path d="M2 2.500h3M2 4.500h3" stroke="#999" strokeWidth=".7" /></Svg>
  </button>
)

function Canvas() {
  const [accelerated, setAccelerated] = useState(false)
  return (
    <div className="relative min-w-0 flex-1 bg-white">
      <PipeModel />
      <label className="absolute right-[38px] top-[18px] flex items-center gap-[3px] text-[#666]">
        <input
          type="checkbox"
          checked={accelerated}
          onChange={(event) => setAccelerated(event.target.checked)}
          className="peer sr-only"
        />
        <Svg w={34} h={18} box="0 0 34 18">
          <rect width="34" height="18" rx="9" fill={accelerated ? '#2878b4' : '#999'} stroke="none" />
          <circle cx={accelerated ? 25 : 9} cy="9" r="6" fill="#fff" stroke="none" />
        </Svg>
        <span className="leading-[13px]">Accelerated Graphics<br /><i>Tech Preview</i></span>
      </label>
      <div className="absolute right-[14px] top-8"><ViewCube /></div>
      <div className="absolute right-0 top-[105px] flex h-[92px] w-[27px] flex-col items-center justify-between rounded-sm border border-[#c2c2c2] bg-[#f4f4f4] py-px">
        <SmallDot />
        <button aria-label="Steering wheel">
          <Svg w={20} h={20} box="0 0 20 20"><path d="M10 1h8.500v9A8.800 8.800 0 1 1 10 1z" fill="#e8eaef" stroke="#8d9198" /><circle cx="10" cy="10" r="7" stroke="#a6aab0" fill="#f4f4f6" /><circle cx="10" cy="9.500" r="4" stroke="#8d9198" fill="#fff" /><path d="M5 15l2-2.500M15 15l-2-2.500" stroke="#8d9198" /></Svg>
        </button>
        <button aria-label="Wheel options"><Caret color="#888" /></button>
        <span className="h-px w-[23px] bg-[#cacaca]" />
        <button aria-label="Zoom region">
          <Svg><path d="M1 1h10v10H1z" fill="#b6d2a2" stroke="#9dbd88" /><circle cx="10.500" cy="10" r="3" fill="#fff" stroke="#888" /><path d="M12.500 12.500l2.500 2.500" stroke="#888" strokeWidth="1.400" /></Svg>
        </button>
        <button aria-label="Zoom options"><Caret color="#888" /></button>
        <SmallDot />
      </div>
    </div>
  )
}

const viewIcons: [string, ReactNode][] = [
  ['Detail level', <Svg><path d="M.5 2.500h15v11H.5z" fill="#f4f4f4" /><path d="M1 4.500h14M1 7h14M1 9.500h14M1 12h14" strokeWidth="1.300" strokeDasharray="1.300 1.300" /><path d="M2.300 5.700h12M2.300 8.200h12M2.300 10.700h12" strokeDasharray="1.300 1.300" /></Svg>],
  ['Visual style', <Svg><path d="M2 5l3-3.500h9.500v9.500l-3.500 3.500H2zM2 5h9v9.500M11 5l3.500-3.500" fill="#f7f7f7" /></Svg>],
  ['Sun path', <Svg><circle cx="6.500" cy="6.500" r="3.500" fill="#f9a81b" stroke="none" /><path d="M6.500 0v2M6.500 11v2M0 6.500h2M2 2l1.300 1.300M11 2L9.700 3.300M2 11l1.300-1.300" stroke="#f9a81b" strokeWidth="1.300" /><Bulb /></Svg>],
  ['Shadows', <Svg><ellipse cx="6" cy="12.500" rx="5.500" ry="2" fill="#aaa" stroke="none" /><circle cx="7" cy="6" r="4.800" fill="#eee" /><Bulb /></Svg>],
  ['Rendering', <Svg><path d="M1 5h2l2 7h6l3-7M5 5q3-2 6 0zM7.500 3V2M14 5l1-1" strokeWidth="1.100" /><Bulb /></Svg>],
  ['Crop view', <Svg><path d="M5 13V5h8v5" stroke="#444" strokeWidth="1.400" /><path d="M0 11h4M11 0v4" stroke="#1a8fe0" strokeWidth="1.500" strokeDasharray="2 1" /><RedX x={8} y={9} /></Svg>],
  ['Crop region', <Svg><path d="M5 13V5h8" stroke="#444" strokeWidth="1.400" /><path d="M0 11h4M11 0v4" stroke="#1a8fe0" strokeWidth="1.500" strokeDasharray="2 1" /><Bulb /></Svg>],
  ['Lock 3D view', <Svg><path d="M1 8l7-6 7 6M3 7v8M13 6.500v2M11 2v3" strokeWidth="1.300" /><path d="M5 8l3-3 3 3v7H5z" fill="#eee" stroke="#777" /><path d="M8 10.500h6V15H8z" fill="#4fc0cf" stroke="#2b97a6" strokeWidth=".7" /><path d="M9.500 10.500V9q1.500-2 3 0v1.500" stroke="#2b97a6" /></Svg>],
  ['Temporary hide', <Svg><circle cx="4.500" cy="9.500" r="2.500" /><circle cx="11.500" cy="9.500" r="2.500" /><path d="M7 9q1-1 2 0M2 8l2-4h1.500M14 8l-2-4h-1.500" /></Svg>],
  ['Reveal hidden', <Svg><circle cx="8" cy="6" r="3.800" fill="#4fc0cf" stroke="none" /><path d="M6.500 9h3v3h-3z" fill="#4fc0cf" stroke="none" /><path d="M6.500 12h3M7 14h2" strokeWidth="1.200" /></Svg>],
  ['View properties', <Svg><path d="M5 11H2.500V2.500H11V5M5 12V5.500h8" stroke="#888" strokeWidth="1.200" /><path d="M7 8h7v6H7z" stroke="#777" strokeDasharray="2 1.500" /></Svg>],
  ['Analytical model', <Svg><path d="M1 6l4-4h10v8M1 6h10v8H1zM11 6l4-4M4 6v8M8 6v8M1 10h10M5 2v4M10 2v4" /><path d="M1 14V8M4 14V7M8 11H3" stroke="#d9343c" /><Bulb color="#f9b233" /></Svg>],
  ['Displacement', <Svg><path d="M6 4l2-2h7v7l-2 2" strokeDasharray="2 1" /><path d="M3 7l2-2.500h8V10l-3 3z" fill="#4c92d0" stroke="#2c6ba6" /><path d="M3 7h6.500v6H3z" fill="#cfe2f3" stroke="#2c6ba6" /></Svg>],
  ['Constraints', <Svg><path d="M1 2v12M15 2v4M1 5h14M1 5l2.500-1.500M1 5l2.500 1.500M15 5l-2.500-1.500" /><path d="M1 11h8" strokeDasharray="2 1" /><Bulb /></Svg>],
]

function ViewArea() {
  return (
    <main className="flex min-w-0 flex-1 flex-col">
      <div className="flex h-[20px] shrink-0 items-center justify-between bg-[#cbcbcb]">
        <div className="flex h-full items-center gap-[6px] bg-white pl-1 pr-1">
          <House />
          <span className="whitespace-nowrap font-bold text-[#222]">3D Fire Protection</span>
          <button aria-label="Close view"><Cross /></button>
        </div>
        <button aria-label="Tab list" className="pr-[6px]">
          <Svg w={8} h={7} box="0 0 8 7"><path d="M0 1h8" /><path d="M.5 3h7L4 6.500z" fill="#555" stroke="none" /></Svg>
        </button>
      </div>
      <div className="flex min-h-0 flex-1">
        <Canvas />
        <div className="mr-[2px] flex w-4 flex-col items-center bg-[#e8e8e8]">
          <button aria-label="Scroll up" className="flex h-4 w-full items-center justify-center border-b border-[#d8d8d8]"><Chevron d={up} /></button>
          <div className="flex flex-1 items-center"><span className="h-4 w-2 rounded-full bg-[#8a8a8a]" /></div>
          <button aria-label="Scroll down" className="flex h-4 w-full items-center justify-center border-t border-[#d8d8d8]"><Chevron /></button>
        </div>
      </div>
      <div className="mr-[2px] flex h-[18px] shrink-0 items-center bg-[#e8e8e8]">
        <div className="flex h-full items-center bg-[#f4f4f4]">
          <button className="w-[73px] pl-[15px] text-left">6" = 1'-0"</button>
          <div className="flex w-[318px]">
            {viewIcons.map(([name, icon]) => (
              <button key={name} aria-label={name} className="flex flex-1 justify-center">{icon}</button>
            ))}
          </div>
          <button aria-label="Scroll left" className="flex w-[15px] justify-center">
            <Svg w={6} h={10} box="0 0 6 10"><path d="M5 1L1 5l4 4" stroke="#8a8a8a" strokeWidth="1.600" /></Svg>
          </button>
        </div>
        <div className="flex flex-1 justify-center border-x border-[#d8d8d8]"><span className="h-2 w-4 rounded-full bg-[#8a8a8a]" /></div>
        <button aria-label="Scroll right" className="flex w-4 justify-center">
          <Svg w={6} h={10} box="0 0 6 10"><path d="M1 1l4 4-4 4" stroke="#8a8a8a" strokeWidth="1.600" /></Svg>
        </button>
        <span className="flex w-4 justify-center">
          <Svg w={8} h={8} box="0 0 8 8"><path d="M5 1h2v2H5zM5 5h2v2H5zM1 5h2v2H1z" fill="#888" stroke="none" /></Svg>
        </span>
      </div>
    </main>
  )
}

const selectIcons: [string, ReactNode][] = [
  ['Select links', <Svg><path d="M8 5.500Q7 6.500 6 6H3.500q-3-2 0-4H6q2 0 2 2t2 2M8 3q1-1 2-1h2.500q3 2 0 4" stroke="#e08a45" strokeWidth="1.300" /><CursorArrow x={8} y={5.5} /></Svg>],
  ['Select underlay', <Svg><path d="M1 7l5-5h4L6 7zM0 12l3-3h6v3z" fill="#4d9ad6" stroke="#2f75ad" strokeWidth=".7" /><CursorArrow x={8} y={5.5} /><RedX /></Svg>],
  ['Select pinned', <Svg><path d="M3 1.500h7M4.500 2v5M8.500 2v5M2 7.500h8M6 8v6" strokeWidth="1.300" /><CursorArrow x={8} y={5.5} /></Svg>],
  ['Select by face', <Svg><path d="M1.500 4L7 1v10l-5.500 4z" fill="#4d9ad6" stroke="#2f75ad" /><CursorArrow x={8} y={5.5} /><RedX /></Svg>],
  ['Drag on selection', <Svg><path d="M6 1v12M0 7h12M4 3l2-2 2 2M4 11l2 2 2-2M2 5L0 7l2 2M10 5l2 2" stroke="#333" strokeWidth="1.100" /><CursorArrow x={9} y={5.5} /></Svg>],
  ['Background processes', <Svg><circle cx="8" cy="8" r="6" stroke="#aaa" strokeWidth="2.500" strokeDasharray="2.200 2.500" /></Svg>],
  ['Filter', <Svg><path d="M1 1.500h14L9.500 8v6L6.500 12V8z" fill="#ddd" strokeWidth="1.200" /></Svg>],
]

function StatusBar() {
  const chevron = (
    <span className="pointer-events-none absolute right-1"><Svg w={8} h={5} box="0 0 8 5"><path d="M0 0l4 4 4-4" stroke="#b0b0b0" /></Svg></span>
  )
  return (
    <footer className="flex h-6 shrink-0 items-center border-t-2 border-[#fafafa] bg-[#f4f4f4] pl-px">
      <p className="w-[414px] whitespace-nowrap">Click to select, TAB for alternates, CTRL adds, SHIFT unselects.</p>
      <button aria-label="Worksets" className="flex w-[20px] justify-center">
        <Svg><path d="M1 3l3-2 3 1v9l-3 2-3-2z" fill="#3f92cc" stroke="#2b6d9e" strokeWidth=".5" /><path d="M8 3l3-2 3 2v6H8z" fill="#dc7c47" stroke="#a85223" strokeWidth=".5" /><path d="M5.500 6l2.500-1 2.500 1v8L8 15.500 5.500 14z" fill="#4cae5a" stroke="#2c7f39" strokeWidth=".5" /><path d="M10.500 14l5-5" stroke="#1b86d8" strokeWidth="1.800" /></Svg>
      </button>
      <label className="relative ml-[2px] flex h-[18px] w-[193px] items-center border-b-2 border-[#dedede]">
        <select aria-label="Active workset" className="w-full appearance-none"><option></option></select>
        {chevron}
      </label>
      <button aria-label="Editing requests" className="flex w-6 justify-center">
        <Svg w={17} box="0 0 17 16">
          <path d="M7 1h7.500v4.500H11L9 7.500v-2H7z" stroke="#999" />
          <circle cx="5" cy="8" r="2" stroke="#999" />
          <path d="M.5 15v-3l3-1.500h3l3 1.500v3z" stroke="#999" />
          <ellipse cx="13.500" cy="11.500" rx="2" ry="3.300" stroke="#999" strokeWidth="1.200" />
        </Svg>
      </button>
      <button aria-label="Design options" className="ml-[9px] flex w-5 justify-center">
        <Svg><path d="M1 1.500h14v13H1z" fill="#eee" /><path d="M1 2.500h14" strokeWidth="3" /><path d="M3 6.500h2M3 9.500h2M3 12.500h2M6.500 6.500H13M6.500 9.500H13M6.500 12.500H13" strokeWidth="1.400" /></Svg>
      </button>
      <button aria-label="Pick to edit" className="flex w-[20px] justify-center">
        <Svg><path d="M3 9V1.500h12v11H8" stroke="#999" /><path d="M3 2.500h12M5 5.500h2M8 5.500h5M5 8.500h2M8 8.500h5M0 12.500h6M4 10l3 2.500L4 15" stroke="#999" strokeWidth="1.500" /></Svg>
      </button>
      <label className="relative flex h-[18px] w-[196px] items-center border-b-2 border-[#dedede] text-[#a0a0a0]">
        <select aria-label="Design option" className="w-full appearance-none pl-1"><option>Main Model</option></select>
        {chevron}
      </label>
      <div className="ml-auto flex items-center gap-1 pr-[39px]">
        {selectIcons.map(([name, icon]) => (
          <button key={name} aria-label={name}>{icon}</button>
        ))}
        <span className="-ml-1">:0</span>
      </div>
    </footer>
  )
}

export default function App() {
  return (
    <div className="flex h-screen flex-col overflow-hidden bg-[#f4f4f4] font-['Open_Sans','Noto_Sans',sans-serif] text-[11px] leading-4 text-[#444]">
      <TitleBar />
      <RibbonTabs />
      <Ribbon />
      <div className="h-[25px] shrink-0 border-b border-[#bdbdbd] bg-[#f4f4f4]" />
      <div className="flex min-h-0 flex-1">
        <aside className="flex w-[262px] shrink-0 flex-col border-r-2 border-[#bebebe]">
          <Properties />
          <ProjectBrowser />
        </aside>
        <ViewArea />
      </div>
      <StatusBar />
    </div>
  )
}
